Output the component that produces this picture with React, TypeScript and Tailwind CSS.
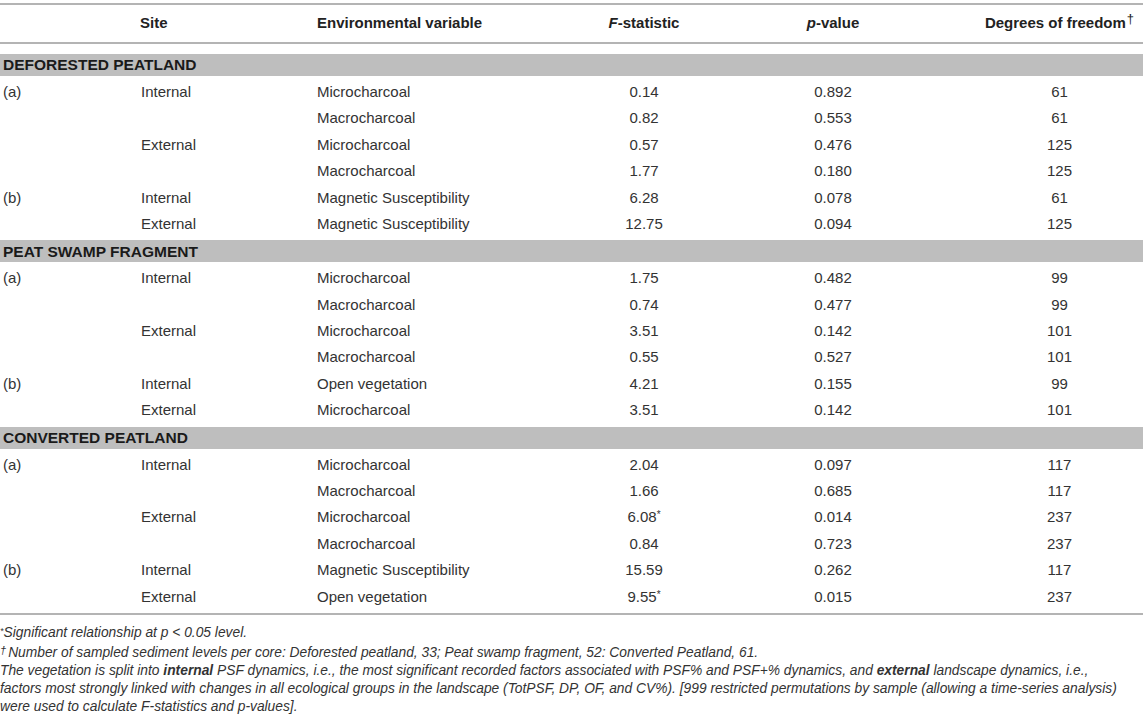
import React from "react";

type Row = { tag?: string; site?: string; variable: string; f: string; p: string; df: string };
type Group = { title: string; rows: Row[] };

const groups: Group[] = [
  {
    title: "DEFORESTED PEATLAND",
    rows: [
      { tag: "(a)", site: "Internal", variable: "Microcharcoal", f: "0.14", p: "0.892", df: "61" },
      { variable: "Macrocharcoal", f: "0.82", p: "0.553", df: "61" },
      { site: "External", variable: "Microcharcoal", f: "0.57", p: "0.476", df: "125" },
      { variable: "Macrocharcoal", f: "1.77", p: "0.180", df: "125" },
      { tag: "(b)", site: "Internal", variable: "Magnetic Susceptibility", f: "6.28", p: "0.078", df: "61" },
      { site: "External", variable: "Magnetic Susceptibility", f: "12.75", p: "0.094", df: "125" },
    ],
  },
  {
    title: "PEAT SWAMP FRAGMENT",
    rows: [
      { tag: "(a)", site: "Internal", variable: "Microcharcoal", f: "1.75", p: "0.482", df: "99" },
      { variable: "Macrocharcoal", f: "0.74", p: "0.477", df: "99" },
      { site: "External", variable: "Microcharcoal", f: "3.51", p: "0.142", df: "101" },
      { variable: "Macrocharcoal", f: "0.55", p: "0.527", df: "101" },
      { tag: "(b)", site: "Internal", variable: "Open vegetation", f: "4.21", p: "0.155", df: "99" },
      { site: "External", variable: "Microcharcoal", f: "3.51", p: "0.142", df: "101" },
    ],
  },
  {
    title: "CONVERTED PEATLAND",
    rows: [
      { tag: "(a)", site: "Internal", variable: "Microcharcoal", f: "2.04", p: "0.097", df: "117" },
      { variable: "Macrocharcoal", f: "1.66", p: "0.685", df: "117" },
      { site: "External", variable: "Microcharcoal", f: "6.08*", p: "0.014", df: "237" },
      { variable: "Macrocharcoal", f: "0.84", p: "0.723", df: "237" },
      { tag: "(b)", site: "Internal", variable: "Magnetic Susceptibility", f: "15.59", p: "0.262", df: "117" },
      { site: "External", variable: "Open vegetation", f: "9.55*", p: "0.015", df: "237" },
    ],
  },
];

const cols = "grid grid-cols-[140px_177px_239px_176px_202px_209px] items-center";

// a value with a trailing "*" gets a small superscript asterisk
const Value = ({ v }: { v: string }) =>
  v.endsWith("*") ? (
    <span>
      {v.slice(0, -1)}
      <span className="relative -top-[4px] text-[10px]">*</span>
    </span>
  ) : (
    <span>{v}</span>
  );

export default function App() {
  return (
    <div className="w-[1143px] h-[724px] bg-white pt-[3px] font-['Liberation_Sans',Arial,sans-serif] text-[15px] text-[#333] overflow-hidden">
      {/* Header */}
      <div className={`${cols} h-[41px] border-t-2 border-b-2 border-[#b4b4b4] font-bold text-[#222]`}>
        <div />
        <div>Site</div>
        <div>Environmental variable</div>
        <div className="text-center">
          <i>F</i>-statistic
        </div>
        <div className="text-center">
          <i>p</i>-value
        </div>
        <div className="text-center pl-[42px]">
          Degrees of freedom<span className="text-[13px] font-normal relative -top-[5px] ml-[1px]">†</span>
        </div>
      </div>

      {/* Body */}
      <div className="mt-[10px] border-b-2 border-[#b4b4b4]">
        {groups.map((g) => (
          <div key={g.title}>
            <div className="h-[22px] bg-[#bebebe] flex items-center px-[3px] font-bold text-[15.5px] text-[#1a1a1a]">
              {g.title}
            </div>
            <div className="py-[3px]">
              {g.rows.map((r, i) => (
                <div key={i} className={`${cols} h-[26.4px]`}>
                  <div className="pl-[3px]">{r.tag}</div>
                  <div className="pl-[1px]">{r.site}</div>
                  <div>{r.variable}</div>
                  <div className="text-center">
                    <Value v={r.f} />
                  </div>
                  <div className="text-center">{r.p}</div>
                  <div className="text-center pl-[42px]">{r.df}</div>
                </div>
              ))}
            </div>
          </div>
        ))}
      </div>

      {/* Footnotes */}
      <div className="mt-[9px] italic text-[13.8px] leading-[17.7px] text-[#333] whitespace-nowrap">
        <div>
          <span className="relative -top-[3px] text-[9px]">*</span>Significant relationship at p &lt; 0.05 level.
        </div>
        <div>
          <span className="relative -top-[3px] text-[11px] mr-[2px]">†</span>Number of sampled sediment levels per core:
          Deforested peatland, 33; Peat swamp fragment, 52: Converted Peatland, 61.
        </div>
        <div>
          The vegetation is split into <b>internal</b> PSF dynamics, i.e., the most significant recorded factors
          associated with PSF% and PSF+% dynamics, and <b>external</b> landscape dynamics, i.e.,
        </div>
        <div>
          factors most strongly linked with changes in all ecological groups in the landscape (TotPSF, DP, OF, and
          CV%). [999 restricted permutations by sample (allowing a time-series analysis)
        </div>
        <div>were used to calculate F-statistics and p-values].</div>
      </div>
    </div>
  );
}
